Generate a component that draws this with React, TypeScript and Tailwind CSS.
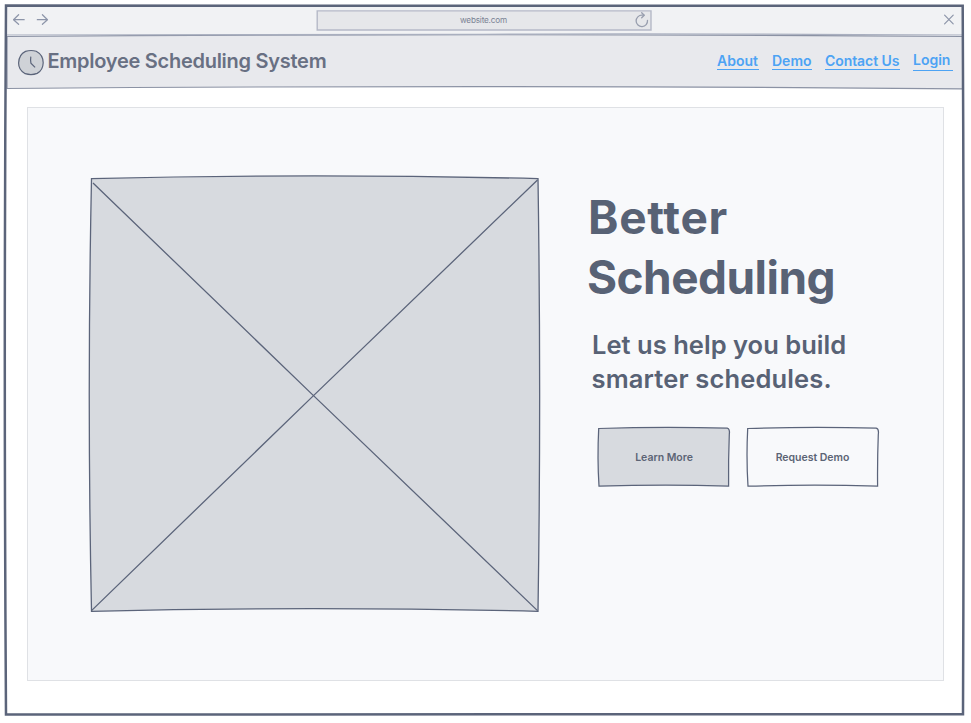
import type { ReactNode } from "react";

const INK = "#5b647a";

function BrowserBar() {
  return (
    <div className="relative flex h-[29px] items-center bg-[#f1f2f4] pr-[8px] pb-[2px] pl-[7px]">
      <svg className="shrink-0" width="36" height="14" viewBox="0 0 36 14" fill="none" stroke="#8d95a9" strokeWidth="1.2" strokeLinecap="round" strokeLinejoin="round">
        <path d="M11.2 6.7H0.6M5.6 1.7L0.5 6.7L5.6 11.3" />
        <path d="M24.3 6.7H34.4M29.4 1.7L34.5 6.7L29.4 11.3" />
      </svg>
      <div className="relative ml-[268px] h-[20px] w-[334px] shrink-0">
        <svg className="absolute top-0 left-0 overflow-visible" width="334" height="20">
          <path d="M0.2 0.9H334V20H0.2Z" fill="#e6e7ea" stroke="#b5b9c7" strokeWidth="1.4" />
        </svg>
        <div className="relative flex h-full items-center">
          <span className="ml-[143px] text-[8.2px] leading-[12px] tracking-[-0.2px] whitespace-nowrap text-[#7a8294]">website.com</span>
          <svg className="mr-[1px] ml-auto" width="16" height="16" viewBox="0 0 16 16" fill="none" stroke="#989eae" strokeWidth="1.3" strokeLinecap="round" strokeLinejoin="round">
            <path d="M13.5 8.3A5.7 5.7 0 1 1 8 3.2H10" />
            <path d="M7.7 0.7L10.2 3.2L7.7 5.7" />
          </svg>
        </div>
      </div>
      <svg className="ml-auto" width="12" height="12" viewBox="0 0 12 12" fill="none" stroke="#8d95a9" strokeWidth="1.2" strokeLinecap="round">
        <path d="M1.6 1.2L10.2 9.9M10.2 1.2L1.6 9.9" />
      </svg>
    </div>
  );
}

function NavBar() {
  return (
    <header className="relative flex h-[54px] pt-px pl-[10px]">
      <svg className="absolute top-[1px] left-0 overflow-visible" width="957" height="53" fill="#e8e9ed" stroke="#8b92a4" strokeWidth="1.2">
        <path d="M1 0.5Q478 -3 957 0.5L956.5 52.8Q500 48.5 1 52.5Z" />
        <path d="M0 -1Q320 -0.5 478 -1.7T957 -1" fill="none" stroke="#a9afbf" />
      </svg>
      <svg className="relative mt-[13px] ml-[0.5px]" width="28" height="28" viewBox="0 0 28 28" stroke={INK} strokeWidth="1.2" fill="none">
        <path d="M8.5 2.4Q14 0.7 19.2 2.3Q26.2 6 26.2 13.8Q26 21.3 20.2 24.4Q14.5 26.5 8.2 24.7Q1.5 21 1.6 14Q2 5.4 8.5 2.4Z" fill="#cfd2d7" />
        <path d="M13.8 7.7Q13.3 11.5 13.9 14.2L18.1 18.4" />
      </svg>
      <h1 className="relative mt-[12px] ml-[3px] text-[20px] leading-[26px] font-semibold tracking-[-0.27px] whitespace-nowrap text-[#687083]">
        Employee Scheduling System
      </h1>
      <nav className="relative mt-[16px] mr-[10px] ml-auto flex text-[14px] leading-[18px] font-semibold whitespace-nowrap text-[#4da3f4]">
        <a className="h-[18px] w-[42px] border-b border-[#4da3f4]">About</a>
        <a className="ml-[13px] h-[18px] w-[40px] border-b border-[#4da3f4]">Demo</a>
        <a className="ml-[13px] h-[18px] w-[75px] border-b border-[#4da3f4] tracking-[-0.08px]">Contact Us</a>
        <a className="mt-[-1px] ml-[13px] h-[20px] w-[40px] border-b border-[#4da3f4]">Login</a>
      </nav>
    </header>
  );
}

function ImagePlaceholder() {
  return (
    <svg className="shrink-0 overflow-visible" width="448" height="434" fill="none" stroke={INK} strokeWidth="1.3">
      <path d="M1.5 1.6Q225 -3.7 448 1.6Q451.3 220 448 434.3Q222 429 1.5 434.3Q-3 218 1.5 1.6Z" fill="#d7dadf" />
      <path d="M3 6L223.5 218.6L447.5 433.6M447.5 3L223.5 218.6L1.5 433.6" />
    </svg>
  );
}

function SketchButton({ fill, children }: { fill: string; children: ReactNode }) {
  return (
    <button className="relative flex h-[59px] w-[132px] items-center justify-center text-[10.5px] leading-[14px] font-semibold tracking-[-0.02px] whitespace-nowrap text-[#5c6475]">
      <svg className="absolute top-0 left-0 overflow-visible" width="132" height="59" fill={fill} stroke={INK} strokeWidth="1.25">
        <path d="M0.7 0.5Q66 -1.7 129.2 0.2Q132.1 0.9 131.3 6.5Q130.3 32 130.6 58.1Q66 56.3 1 58.2Q-0.8 30 0.7 0.5Z" />
      </svg>
      <span className="relative">{children}</span>
    </button>
  );
}

export default function App() {
  return (
    <div className="relative h-[723px] w-[971px] overflow-hidden bg-white pt-[6px] pl-[6px] font-['Inter','Liberation_Sans',sans-serif]">
      <div className="flex h-[709px] w-[957px] flex-col">
        <BrowserBar />
        <NavBar />
        <main className="relative mt-[18px] ml-[21px] flex h-[574px] w-[917px] border border-[#dfe1e5] bg-[#f8f9fb] pt-[69px] pl-[62px]">
          <ImagePlaceholder />
          <section className="ml-[50px] pt-[10px] whitespace-nowrap text-[#586275]">
            <h2 className="text-[46px] leading-[60px]">
              <span className="block font-bold tracking-[0.75px]">Better</span>
              <span className="ml-[-1px] block font-[650] tracking-[-0.55px]">Scheduling</span>
            </h2>
            <p className="mt-[21px] ml-[4px] text-[25.5px] leading-[34px] font-semibold">
              <span className="block tracking-[0.03px]">Let us help you build</span>
              <span className="ml-[-0.5px] block tracking-[0.15px]">smarter schedules.</span>
            </p>
            <div className="mt-[32px] ml-[10px] flex gap-[16.5px]">
              <SketchButton fill="#d7dadf">Learn More</SketchButton>
              <SketchButton fill="#f8f9fb">Request Demo</SketchButton>
            </div>
          </section>
        </main>
      </div>
      <svg className="pointer-events-none absolute top-0 left-0" width="971" height="723" fill="none" stroke={INK} strokeWidth="2.5">
        <path d="M6 5.6Q480 4.9 962.7 5.8Q964.5 350 963 714.2Q480 713.4 6 714.5Q3.6 360 6 5.6Z" />
      </svg>
    </div>
  );
}
